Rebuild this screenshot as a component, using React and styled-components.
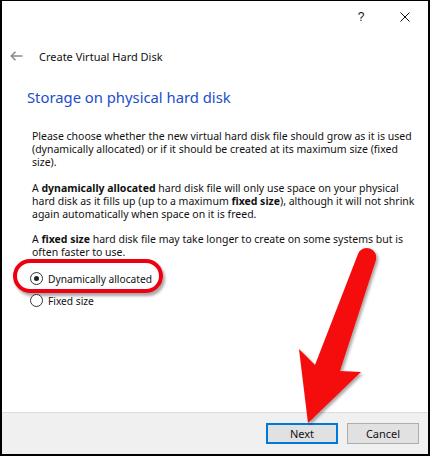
import React from "react";
import styled, { createGlobalStyle } from "styled-components";

const GlobalStyle = createGlobalStyle`
  html, body {
    margin: 0;
    padding: 0;
    background: #ffffff;
  }
  body {
    font-family: "Noto Sans", "Open Sans", sans-serif;
    color: #000;
  }
`;

const Dialog = () => {
    return (
        <Frame>
            <GlobalStyle/>
            <TitleBar>
                <TitleButton>?</TitleButton>
                <TitleButton>
                    <svg width="10" height="10" viewBox="0 0 10 10">
                        <path d="M0.5 0.5 L9.5 9.5 M9.5 0.5 L0.5 9.5" stroke="#111" strokeWidth="1"/>
                    </svg>
                </TitleButton>
            </TitleBar>

            <Header>
                <BackArrow>
                    <svg width="13" height="10" viewBox="0 0 13 10">
                        <path d="M5.5 0.8 L1.3 5 L5.5 9.2 M1.3 5 L12.5 5" stroke="#8c8c8c" strokeWidth="1.6" fill="none"/>
                    </svg>
                </BackArrow>
                <HeaderTitle>Create Virtual Hard Disk</HeaderTitle>
            </Header>

            <Content>
                <Heading>Storage on physical hard disk</Heading>
                <Body>
                    <Para>
                        Please choose whether the new virtual hard disk file should grow as it is used<br/>
                        (dynamically allocated) or if it should be created at its maximum size (fixed<br/>
                        size).
                    </Para>
                    <Para>
                        A <b>dynamically allocated</b> hard disk file will only use space on your physical<br/>
                        hard disk as it fills up (up to a maximum <b>fixed size</b>), although it will not shrink<br/>
                        again automatically when space on it is freed.
                    </Para>
                    <Para>
                        A <b>fixed size</b> hard disk file may take longer to create on some systems but is<br/>
                        often faster to use.
                    </Para>
                </Body>

                <Options>
                    <RadioRow>
                        <Highlight/>
                        <Radio checked/>
                        <RadioLabel>Dynamically allocated</RadioLabel>
                    </RadioRow>
                    <RadioRow>
                        <Radio/>
                        <RadioLabel>Fixed size</RadioLabel>
                    </RadioRow>
                </Options>
            </Content>

            <Footer>
                <Button primary>Next</Button>
                <Button>Cancel</Button>
            </Footer>

            <ArrowOverlay width="430" height="456" viewBox="0 0 430 456">
                <defs>
                    <filter id="shade" x="-20%" y="-20%" width="140%" height="140%">
                        <feDropShadow dx="2" dy="2" stdDeviation="1.5" floodColor="#000" floodOpacity="0.35"/>
                    </filter>
                </defs>
                <path
                    d="M358 254 A9.5 9.5 0 0 1 376 260 L340 371 L361 372 L308 423 L299 349 L315 365 Z"
                    fill="#f50a0a"
                    filter="url(#shade)"
                />
            </ArrowOverlay>
        </Frame>
    );
}

const Frame = styled.div`
  position: relative;
  width: 430px;
  height: 456px;
  box-sizing: border-box;
  border-top: 1px solid #000;
  border-left: 2px solid #000;
  border-right: 2px solid #000;
  border-bottom: 2px solid #000;
  background: #fff;
  display: flex;
  flex-direction: column;
  overflow: hidden;
`

const TitleBar = styled.div`
  height: 31px;
  display: flex;
  justify-content: flex-end;
  align-items: center;
  padding-right: 16px;
  gap: 30px;
`

const TitleButton = styled.div`
  font-family: "Liberation Sans", Arial, sans-serif;
  font-size: 12px;
  color: #111;
  width: 14px;
  display: flex;
  justify-content: center;
  align-items: center;
`

const Header = styled.div`
  margin-top: 12px;
  height: 24px;
  display: flex;
  align-items: center;
  padding-left: 8px;
`

const BackArrow = styled.div`
  width: 29px;
  display: flex;
  align-items: center;
`

const HeaderTitle = styled.div`
  font-size: 11px;
  color: #111;
`

const Content = styled.div`
  padding-left: 25px;
`

const Heading = styled.div`
  margin-top: 19px;
  font-size: 14.8px;
  line-height: 20px;
  color: #1b4ec9;
`

const Body = styled.div`
  margin-top: 23px;
  padding-left: 5px;
`

const Para = styled.p`
  margin: 0 0 12.5px 0;
  font-size: 10.5px;
  line-height: 13px;
  color: #111;
  white-space: nowrap;

  b {
    font-weight: 700;
  }
`

const Options = styled.div`
  margin-top: 7px;
  padding-left: 3px;
  display: flex;
  flex-direction: column;
  gap: 8px;
`

const RadioRow = styled.div`
  position: relative;
  height: 14px;
  display: flex;
  align-items: center;
  gap: 5px;
`

const Radio = styled.span`
  width: 11px;
  height: 11px;
  border: 1px solid #333;
  border-radius: 50%;
  background: #fff;
  display: flex;
  align-items: center;
  justify-content: center;

  &::after {
    content: "";
    width: 5px;
    height: 5px;
    border-radius: 50%;
    background: ${props => props.checked ? "#222" : "transparent"};
  }
`

const RadioLabel = styled.span`
  font-size: 10.2px;
  color: #111;
`

const Highlight = styled.span`
  position: absolute;
  box-sizing: border-box;
  left: -17px;
  top: -13px;
  width: 150px;
  height: 34px;
  border: 4px solid #ee0010;
  border-radius: 17px;
  box-shadow: 2px 3px 3px rgba(0, 0, 0, 0.35);
`

const Footer = styled.div`
  margin-top: auto;
  height: 41px;
  background: #f0f0f0;
  border-top: 1px solid #dcdcdc;
  display: flex;
  justify-content: flex-end;
  align-items: center;
  gap: 9px;
  padding-right: 9px;
`

const Button = styled.div`
  box-sizing: border-box;
  width: 72px;
  height: 21px;
  display: flex;
  align-items: center;
  justify-content: center;
  background: #e1e1e1;
  border: ${props => props.primary ? "2px solid #0078d7" : "1px solid #adadad"};
  font-size: 11px;
  color: #111;
`

const ArrowOverlay = styled.svg`
  position: absolute;
  left: -2px;
  top: -1px;
  pointer-events: none;
`

export default Dialog;
